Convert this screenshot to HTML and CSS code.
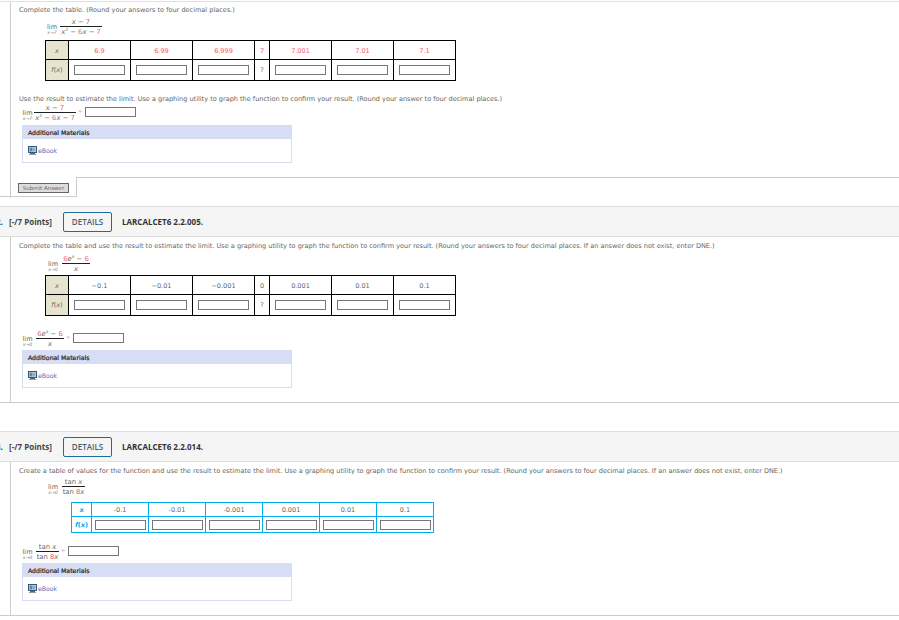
FILE: index.html
```html
<!DOCTYPE html>
<html lang="en">
<head>
<meta charset="utf-8">
<title>Limits</title>
<link rel="stylesheet" href="styles.css">
</head>
<body>
<svg class="defs" width="0" height="0" aria-hidden="true"><defs>
<symbol id="book" viewBox="0 0 9 9"><rect x="0.5" y="0.5" width="8" height="6" fill="#d5e0e8" stroke="#33597a"/><rect x="1.5" y="1.5" width="3" height="4" fill="#5d86a6"/><rect x="4.5" y="1.5" width="3" height="4" fill="#8fadc4"/><rect x="2" y="7" width="5" height="1" fill="#666"/><rect x="1" y="8" width="7" height="1" fill="#999"/></symbol>
</defs></svg>

<section class="panel first">
  <p class="prompt">Complete the table. (Round your answers to four decimal places.)</p>
  <div class="limit limit-a la1">
    <span class="lim">lim<small>x→7</small></span>
    <span class="frac w42"><span class="num"><i>x</i> − <b>7</b></span><span class="den"><i>x</i><sup>2</sup> − <b>6</b><i>x</i> − <b>7</b></span></span>
  </div>
  <table class="vals t1">
    <tr class="r1"><th class="shade"><i>x</i></th><td class="red">6.9</td><td class="red">6.99</td><td class="red">6.999</td><td class="red nar">7</td><td class="red">7.001</td><td class="red">7.01</td><td class="red">7.1</td></tr>
    <tr class="r2"><th class="shade"><i>f</i>(<i>x</i>)</th><td><input class="box"></td><td><input class="box"></td><td><input class="box"></td><td class="nar">?</td><td><input class="box"></td><td><input class="box"></td><td><input class="box"></td></tr>
  </table>
  <p class="prompt p2">Use the result to estimate the limit. Use a graphing utility to graph the function to confirm your result. (Round your answer to four decimal places.)</p>
  <div class="limit limit-b b1">
    <span class="lim">lim<small>x→7</small></span>
    <span class="frac w42"><span class="num"><i>x</i> − <b>7</b></span><span class="den"><i>x</i><sup>2</sup> − <b>6</b><i>x</i> − <b>7</b></span></span>
    <span class="eq">≈</span><input class="box">
  </div>
  <div class="materials">
    <div class="mat-head">Additional Materials</div>
    <div class="mat-body"><svg class="book"><use href="#book"/></svg><a>eBook</a></div>
  </div>
  <div class="foot">
    <div class="tab"><button class="submit">Submit Answer</button></div>
    <div class="fill"></div>
  </div>
</section>

<header class="qhead h2">
  <span class="qnum">2.</span><span class="pts">[-/7 Points]</span><button class="details">DETAILS</button><span class="code">LARCALCET6 2.2.005.</span>
</header>
<section class="panel second">
  <p class="prompt">Complete the table and use the result to estimate the limit. Use a graphing utility to graph the function to confirm your result. (Round your answers to four decimal places. If an answer does not exist, enter DNE.)</p>
  <div class="limit limit-a la2">
    <span class="lim">lim<small>x→0</small></span>
    <span class="frac w28"><span class="num"><b>6</b><i>e<sup>x</sup></i> − <b>6</b></span><span class="den"><i>x</i></span></span>
  </div>
  <table class="vals t1 t2">
    <tr class="r1"><th class="shade"><i>x</i></th><td>−0.1</td><td>−0.01</td><td>−0.001</td><td class="nar">0</td><td>0.001</td><td>0.01</td><td>0.1</td></tr>
    <tr class="r2"><th class="shade"><i>f</i>(<i>x</i>)</th><td><input class="box"></td><td><input class="box"></td><td><input class="box"></td><td class="nar">?</td><td><input class="box"></td><td><input class="box"></td><td><input class="box"></td></tr>
  </table>
  <div class="limit limit-b b2">
    <span class="lim">lim<small>x→0</small></span>
    <span class="frac w28"><span class="num"><b>6</b><i>e<sup>x</sup></i> − <b>6</b></span><span class="den"><i>x</i></span></span>
    <span class="eq">≈</span><input class="box">
  </div>
  <div class="materials m0">
    <div class="mat-head">Additional Materials</div>
    <div class="mat-body"><svg class="book"><use href="#book"/></svg><a>eBook</a></div>
  </div>
</section>

<header class="qhead h3">
  <span class="qnum">3.</span><span class="pts">[-/7 Points]</span><button class="details">DETAILS</button><span class="code">LARCALCET6 2.2.014.</span>
</header>
<section class="panel third">
  <p class="prompt">Create a table of values for the function and use the result to estimate the limit. Use a graphing utility to graph the function to confirm your result. (Round your answers to four decimal places. If an answer does not exist, enter DNE.)</p>
  <div class="limit limit-a la3">
    <span class="lim">lim<small>x→0</small></span>
    <span class="frac w23"><span class="num">tan <i>x</i></span><span class="den">tan <b>8</b><i>x</i></span></span>
  </div>
  <table class="vals t3">
    <tr class="r1"><th><i>x</i></th><td>-0.1</td><td>-0.01</td><td>-0.001</td><td>0.001</td><td>0.01</td><td>0.1</td></tr>
    <tr class="r2"><th><i>f</i>(<i>x</i>)</th><td><input class="box"></td><td><input class="box"></td><td><input class="box"></td><td><input class="box"></td><td><input class="box"></td><td><input class="box"></td></tr>
  </table>
  <div class="limit limit-b b3">
    <span class="lim">lim<small>x→0</small></span>
    <span class="frac w23"><span class="num">tan <i>x</i></span><span class="den">tan <b>8</b><i>x</i></span></span>
    <span class="eq">≈</span><input class="box">
  </div>
  <div class="materials m0">
    <div class="mat-head">Additional Materials</div>
    <div class="mat-body"><svg class="book"><use href="#book"/></svg><a>eBook</a></div>
  </div>
</section>
</body>
</html>
```
FILE: styles.css
```css
* { box-sizing: border-box; }
html, body { margin: 0; padding: 0; background: #fff; }
body {
  font-family: "DejaVu Sans", Verdana, sans-serif;
  font-size: 6.55px;
  line-height: 10px;
  color: #666;
  overflow: hidden;
  height: 620px;
}
.defs { position: absolute; }
p { margin: 0; }

.panel { padding: 4px 0 0 11px; background: linear-gradient(#ccc, #ccc) 10px 0 / 1px 100% no-repeat; }
.first { border-top: 1px solid #e0e0e0; margin-top: 1px; padding-top: 3px; height: 197px; }
.second { height: 166px; border-bottom: 1px solid #ccc; }
.third { height: 154px; border-bottom: 1px solid #ccc; }

.prompt { padding-left: 8px; white-space: nowrap; }
.p2 { margin-top: 13px; }

.limit { display: flex; align-items: flex-start; white-space: nowrap; }
.limit .box { margin: 4px 0 0 0; }
.limit-a { margin-left: 35px; height: 20px; }
.limit-b { margin-left: 10px; }
.la1 { margin-top: 2px; }
.la2 { margin-top: 3px; }
.la3 { margin-top: 1px; margin-bottom: 5px; }
.b1 { margin-top: -1px; height: 21px; }
.b2 { margin-top: 13px; height: 21px; }
.b3 { margin-top: 9px; height: 21px; }

.lim { display: flex; flex-direction: column; align-items: center; width: 13px; margin-right: 2px; padding-top: 7px; line-height: 6px; font-size: 6.5px; }
.la1 .lim { width: 12px; }
.la2 .lim, .la3 .lim { width: 14px; }
.b1 .lim { margin-right: 0; }
.lim small { font-size: 4.5px; line-height: 6px; font-style: italic; white-space: nowrap; color: #777; }
.frac { display: flex; flex-direction: column; align-items: center; font-size: 6.8px; }
.num { height: 10px; line-height: 10px; border-bottom: 1px solid #222; width: 100%; text-align: center; }
.den { height: 9px; line-height: 11px; }
.frac b { font-weight: normal; color: #f55b6b; }
.frac sup { font-size: 4.5px; line-height: 0; vertical-align: 3px; }
.w42 { width: 42px; }
.w28 { width: 28px; }
.w23 { width: 23px; }
.eq { margin: 3px 2px 0 2px; width: 5px; font-size: 5px; line-height: 10px; color: #999; }

.vals { border-collapse: collapse; table-layout: fixed; text-align: center; margin-left: 34px; }
.vals th, .vals td { padding: 0; font-weight: normal; vertical-align: middle; }
.vals .r1 th, .vals .r1 td { padding-top: 1px; }
.t1 { width: 411px; margin-top: 3px; }
.t1 th, .t1 td { border: 1px solid #000; width: 62px; }
.t1 th { width: 23px; }
.t1 .nar { width: 15px; }
.t1 .r1 { height: 19px; }
.t1 .r2 { height: 21px; }
.t2 { margin-top: 1px; }
.shade { background: #e6e4cf; }
.red { color: #f55b6b; }
.box { display: block; width: 51px; height: 10px; border: 1px solid #777; margin: 0 auto; padding: 0; background: #fff; border-radius: 0; }

.t3 { width: 363px; margin-left: 60px; }
.t3 th, .t3 td { border: 1px solid #00aeef; width: 57px; }
.t3 th { width: 20px; color: #00aeef; font-weight: bold; }
.t3 .r1 { height: 14px; }
.t3 .r2 { height: 16px; }

.materials { width: 270px; height: 38px; margin-left: 11px; margin-top: 1px; border: 1px solid #d6ddf5; }
.m0 { margin-top: 0; }
.mat-head { height: 13px; background: #d6ddf5; padding-left: 5px; color: #222; line-height: 13px; font-size: 6.2px; -webkit-text-stroke: 0.2px #222; }
.mat-body { display: flex; align-items: center; padding: 7px 0 0 5px; height: 16px; }
.book { width: 9px; height: 9px; margin-right: 1px; flex: none; }
.mat-body a { color: #5a6fb5; font-size: 6.2px; }

.foot { display: flex; margin-left: -11px; margin-top: 14px; height: 20px; }
.tab { width: 77px; border-right: 1px solid #ccc; border-bottom: 1px solid #ccc; padding: 6px 0 0 18px; }
.fill { flex: 1; border-top: 1px solid #ccc; }
.submit { display: block; width: 51px; height: 10px; padding: 0; border: 1px solid #666; background: #ddd; color: #666; font: 5.5px/8px "DejaVu Sans", sans-serif; }

.qhead { display: flex; align-items: center; height: 31px; background: #f5f5f5; border-top: 1px solid #ddd; border-bottom: 1px solid #ddd; font-family: "Open Sans", sans-serif; font-size: 8px; color: #333; white-space: nowrap; }
.h2 { margin-top: 8px; }
.h3 { margin-top: 28px; }
.qnum { width: 7px; margin-left: -4px; margin-right: 6px; font-weight: 700; flex: none; }
.pts { font-weight: 700; width: 54px; flex: none; color: #444; }
.details { width: 49px; height: 20px; padding: 0; background: #fff0; border: 1px solid #1f6c9c; border-radius: 2px; font: 600 8px/18px "Open Sans", sans-serif; color: #47606f; margin-right: 10px; }
.code { font-weight: 700; color: #333; }
```
